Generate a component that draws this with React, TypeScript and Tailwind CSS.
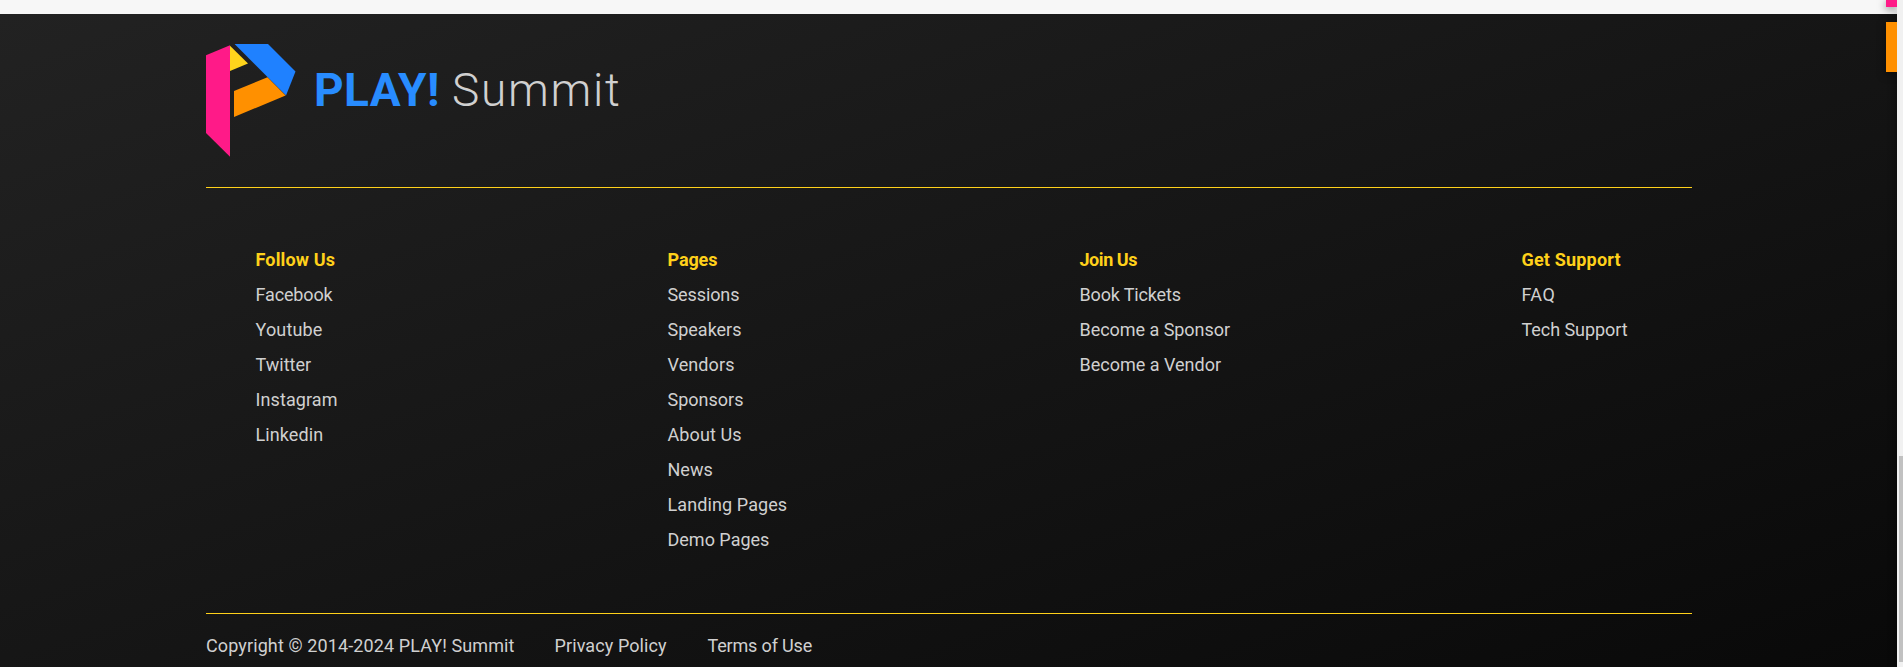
type Item = { label: string; track?: string };

const columns: { title: Item; width: string; links: Item[] }[] = [
  {
    title: { label: "Follow Us", track: "tracking-[0.15px]" },
    width: "w-[412px]",
    links: [
      { label: "Facebook", track: "tracking-[-0.15px]" },
      { label: "Youtube", track: "tracking-[0.15px]" },
      { label: "Twitter" },
      { label: "Instagram", track: "tracking-[0.1px]" },
      { label: "Linkedin", track: "tracking-[0.1px]" },
    ],
  },
  {
    title: { label: "Pages", track: "tracking-[-0.1px]" },
    width: "w-[412px]",
    links: [
      { label: "Sessions", track: "tracking-[-0.1px]" },
      { label: "Speakers" },
      { label: "Vendors", track: "tracking-[0.1px]" },
      { label: "Sponsors" },
      { label: "About Us", track: "tracking-[0.1px]" },
      { label: "News" },
      { label: "Landing Pages", track: "tracking-[0.1px]" },
      { label: "Demo Pages" },
    ],
  },
  {
    title: { label: "Join Us", track: "tracking-[-0.45px]" },
    width: "w-[442px]",
    links: [
      { label: "Book Tickets", track: "tracking-[-0.15px]" },
      { label: "Become a Sponsor", track: "tracking-[-0.04px]" },
      { label: "Become a Vendor" },
    ],
  },
  {
    title: { label: "Get Support", track: "tracking-[0.18px]" },
    width: "w-[160px]",
    links: [
      { label: "FAQ", track: "tracking-[0.4px]" },
      { label: "Tech Support", track: "tracking-[-0.05px]" },
    ],
  },
];

function Logo() {
  return (
    <svg width="90" height="114" viewBox="0 0 90 114" className="shrink-0">
      <path fill="#ff1a88" d="M0 11.2 24 1.2V112.7L0 89z" />
      <path fill="#ffd41c" d="M24 1.8 42 19.4 24 27z" />
      <path fill="#1f81ff" d="M28.6 0H62L89.5 27.5 80 51.5z" />
      <path fill="#ff9000" d="M28 47 61.5 33.3 79.6 51.5 28 73z" />
    </svg>
  );
}

export default function App() {
  return (
    <div className="flex h-[667px] w-[1903px] overflow-hidden bg-[#f1f1f1] font-['Roboto',sans-serif] text-[18px] text-[#d0d0d0]">
      <div className="relative flex w-[1897px] shrink-0 flex-col overflow-hidden bg-[#f7f7f7] pt-[14px]">
        <footer className="flex h-[653px] flex-col bg-[linear-gradient(160deg,#222,#090909)] pl-[206px]">
          <div className="flex h-[174px] w-[1486px] border-b border-[#ffd11a] pt-[30px]">
            <Logo />
            <div className="flex pt-[16px] pl-[18px] text-[46px] leading-[60px]">
              <span className="w-[138px] font-bold tracking-[0.4px] text-[#288cff]">PLAY!</span>
              <span className="font-light tracking-[1.7px]">Summit</span>
            </div>
          </div>
          <div className="flex h-[426px] w-[1486px] border-b border-[#ffd11a] pt-[54px] pl-[49.5px]">
            {columns.map((c) => (
              <div key={c.title.label} className={c.width}>
                <div className={`h-[35px] leading-[35px] font-bold text-[#ffd11a] ${c.title.track ?? ""}`}>
                  {c.title.label}
                </div>
                {c.links.map((l) => (
                  <div key={l.label} className={`h-[35px] leading-[35px] ${l.track ?? ""}`}>
                    {l.label}
                  </div>
                ))}
              </div>
            ))}
          </div>
          <div className="flex pt-[14px] leading-[36px]">
            <span className="w-[348.5px] tracking-[0.11px]">Copyright © 2014-2024 PLAY! Summit</span>
            <span className="w-[153px] tracking-[0.1px]">Privacy Policy</span>
            <span className="tracking-[-0.17px]">Terms of Use</span>
          </div>
        </footer>
        <div className="absolute top-0 right-0 h-[7px] w-[11px] bg-[#ff1a88] shadow-[0_2px_8px_rgba(0,0,0,0.5)]" />
        <div className="absolute top-[14px] -right-[4px] h-full w-[4px] shadow-[0_0_8px_rgba(0,0,0,0.6)]" />
        <div className="absolute top-[22px] right-0 h-[50px] w-[11px] bg-[#ff9000] shadow-[0_2px_8px_rgba(0,0,0,0.5)]" />
      </div>
      <div className="flex w-[6px] flex-col items-end pt-[456px]">
        <div className="h-[206px] w-[4px] bg-[#c1c1c1]" />
      </div>
    </div>
  );
}
